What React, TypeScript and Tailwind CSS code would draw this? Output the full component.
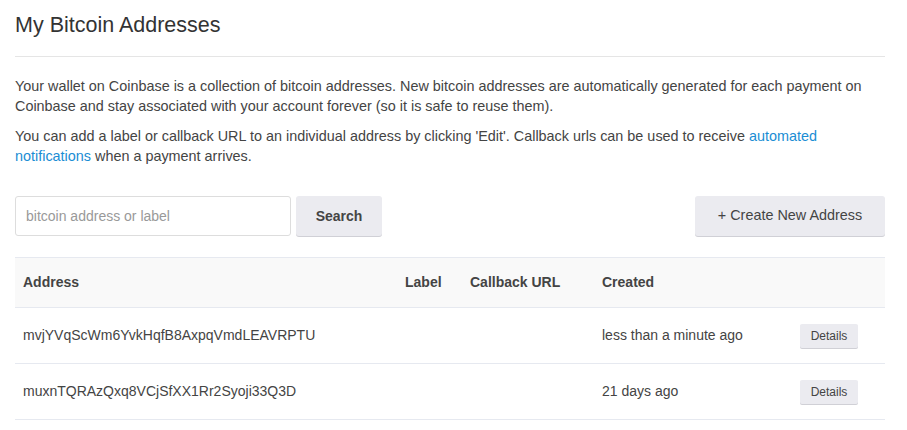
import React from 'react';

const addresses = [
  { address: 'mvjYVqScWm6YvkHqfB8AxpqVmdLEAVRPTU', label: '', callback: '', created: 'less than a minute ago' },
  { address: 'muxnTQRAzQxq8VCjSfXX1Rr2Syoji33Q3D', label: '', callback: '', created: '21 days ago' },
];

const App: React.FC = () => {
  return (
    <div className="min-h-[430px] w-[907px] bg-white px-[15px] text-[#444] font-['Liberation_Sans',Arial,sans-serif]">
      <h1 className="pt-[10px] pb-[16px] text-[21.5px] leading-[30px] font-normal text-[#333] border-b border-[#e5e5e5] mr-[7px]">
        My Bitcoin Addresses
      </h1>

      {/* Intro */}
      <div className="mt-[19px] text-[14.4px] leading-[20px] mr-[7px]">
        <p>
          Your wallet on Coinbase is a collection of bitcoin addresses. New bitcoin addresses are automatically generated for each payment on Coinbase and stay associated with your account forever (so it is safe to reuse them).
        </p>
        <p className="mt-[10px] pr-[40px]">
          You can add a label or callback URL to an individual address by clicking 'Edit'. Callback urls can be used to receive{' '}
          <a href="#" className="text-[#1a8dd4]">automated notifications</a> when a payment arrives.
        </p>
      </div>

      {/* Search + create */}
      <div className="mt-[30px] flex items-center justify-between mr-[7px]">
        <div className="flex items-center gap-[5px]">
          <input
            type="text"
            placeholder="bitcoin address or label"
            className="h-[40px] w-[276px] rounded-[3px] border border-[#ddd] px-[10px] text-[14px] text-[#444] placeholder:text-[#999] outline-none"
          />
          <button className="h-[40px] w-[86px] rounded-[3px] bg-[#ebebf0] text-[14px] font-bold text-[#444] shadow-[0_1px_0_#d0d0d6]">
            Search
          </button>
        </div>
        <button className="h-[40px] w-[190px] rounded-[3px] bg-[#ebebf0] text-[14.4px] text-[#444] shadow-[0_1px_0_#d0d0d6]">
          + Create New Address
        </button>
      </div>

      {/* Table */}
      <table className="mt-[21px] w-[870px] table-fixed border-collapse text-[14px]">
        <colgroup>
          <col className="w-[382px]" />
          <col className="w-[65px]" />
          <col className="w-[132px]" />
          <col className="w-[198px]" />
          <col className="w-[93px]" />
        </colgroup>
        <thead>
          <tr className="h-[50px] bg-[#f9f9f9] border-y border-[#e6e9f0]">
            <th className="px-[8px] text-left font-bold">Address</th>
            <th className="px-[8px] text-left font-bold">Label</th>
            <th className="px-[8px] text-left font-bold">Callback URL</th>
            <th className="px-[8px] text-left font-bold">Created</th>
            <th />
          </tr>
        </thead>
        <tbody>
          {addresses.map((a) => (
            <tr key={a.address} className="h-[56px] border-b border-[#e6e9f0]">
              <td className="px-[8px]">{a.address}</td>
              <td className="px-[8px]">{a.label}</td>
              <td className="px-[8px]">{a.callback}</td>
              <td className="px-[8px]">{a.created}</td>
              <td className="px-[8px]">
                <button className="h-[24px] w-[58px] rounded-[2px] bg-[#ebebf0] text-[12px] text-[#444] shadow-[0_1px_0_#d0d0d6]">
                  Details
                </button>
              </td>
            </tr>
          ))}
        </tbody>
      </table>
    </div>
  );
};

export default App;
